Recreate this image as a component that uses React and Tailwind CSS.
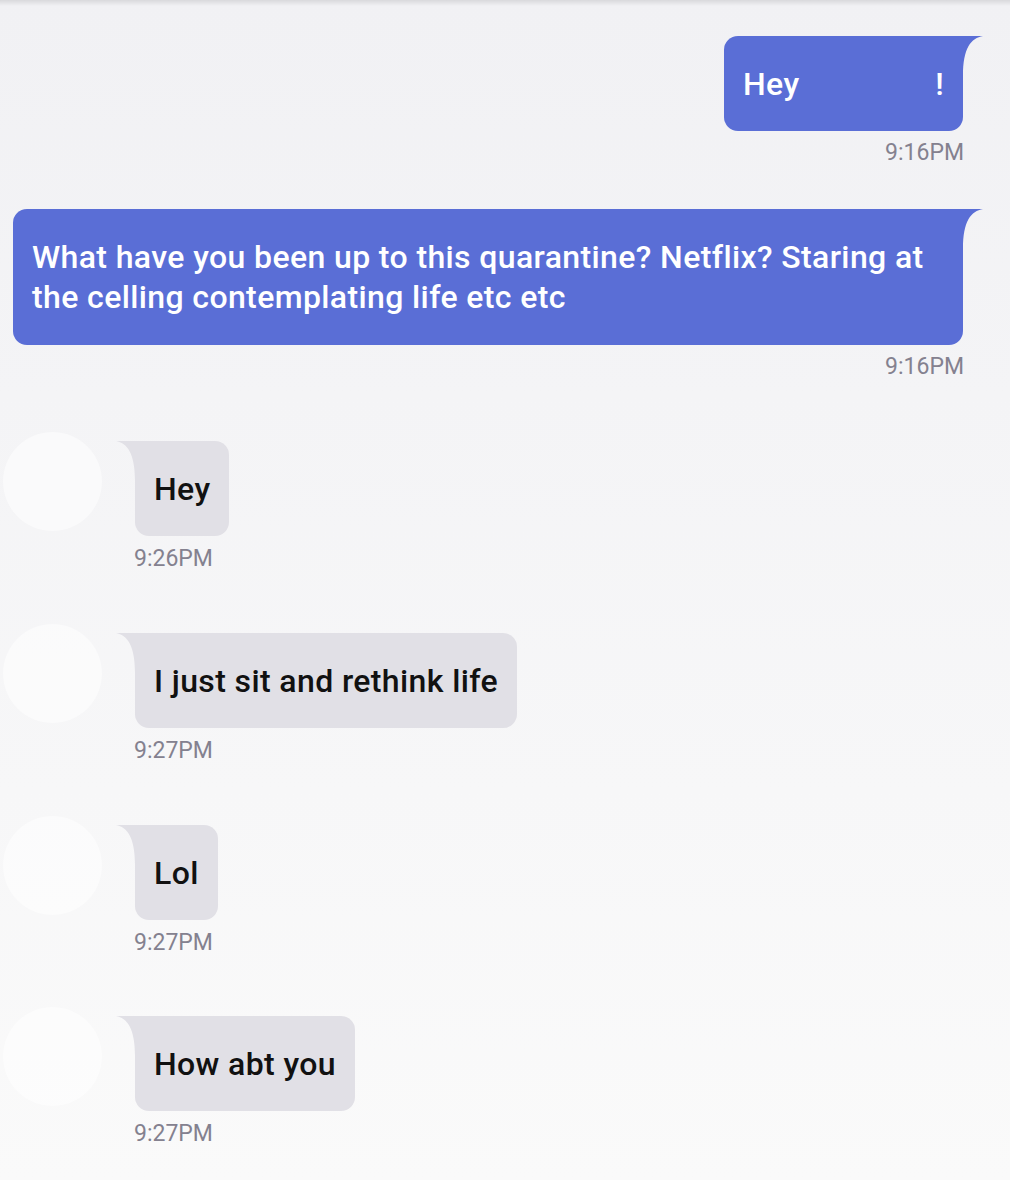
import React from "react";

const SENT = "#5a6ed6";
const RECV = "#e1e0e6";

function TailRight({ color }) {
  return (
    <svg width="20" height="40" viewBox="0 0 20 40" className="block shrink-0">
      <path d="M0 0 H20 C8 2 0 12 0 40 Z" fill={color} />
    </svg>
  );
}

function TailLeft({ color }) {
  return (
    <svg width="19" height="40" viewBox="0 0 19 40" className="block shrink-0">
      <path d="M19 0 H0 C11 2 19 12 19 40 Z" fill={color} />
    </svg>
  );
}

function Sent({ children, className = "", time, bodyClass = "" }) {
  return (
    <div className={"flex flex-col items-end " + className}>
      <div className="flex items-start pr-[27px]">
        <div
          className={
            "rounded-[14px] rounded-tr-none bg-[#5a6ed6] px-[19px] pt-[28px] pb-[27px] text-[32px] leading-[40px] tracking-[0.38px] font-medium text-white " +
            bodyClass
          }
        >
          {children}
        </div>
        <TailRight color={SENT} />
      </div>
      <div className="mt-[9px] pr-[46px] text-[23px] leading-[26px] text-[#84818f]">
        {time}
      </div>
    </div>
  );
}

function Received({ children, className = "", time }) {
  return (
    <div className={"flex flex-col " + className}>
      <div className="flex items-start pl-[3px]">
        <div className="mt-[-9px] h-[99px] w-[99px] shrink-0 rounded-full bg-white/50" />
        <div className="ml-[14px] flex items-start">
          <TailLeft color={RECV} />
          <div className="rounded-[14px] rounded-tl-none bg-[#e1e0e6] px-[19px] pt-[28px] pb-[27px] text-[32px] leading-[40px] tracking-[0.38px] font-medium text-[#111111]">
            {children}
          </div>
        </div>
      </div>
      <div className="mt-[10px] pl-[134px] text-[23px] leading-[26px] text-[#84818f]">
        {time}
      </div>
    </div>
  );
}

export default function App() {
  return (
    <div
      className="relative min-h-[1180px] w-full overflow-hidden bg-gradient-to-b from-[#f1f1f4] to-[#fafafa] pt-[36px]"
      style={{ fontFamily: "Roboto, 'Noto Sans', sans-serif" }}
    >
      <div className="pointer-events-none absolute inset-x-0 top-0 h-[6px] bg-gradient-to-b from-[#d9d9dc] to-transparent" />

      <Sent time="9:16PM" bodyClass="flex w-[239px] justify-between">
        <span>Hey</span>
        <span>!</span>
      </Sent>

      <Sent time="9:16PM" className="mt-[43px] pl-[13px]" bodyClass="flex-1 pb-[28px]">
        What have you been up to this quarantine? Netflix? Staring at the
        celling contemplating life etc etc
      </Sent>

      <Received time="9:26PM" className="mt-[61px]">
        Hey
      </Received>

      <Received time="9:27PM" className="mt-[61px]">
        I just sit and rethink life
      </Received>

      <Received time="9:27PM" className="mt-[61px]">
        Lol
      </Received>

      <Received time="9:27PM" className="mt-[60px]">
        How abt you
      </Received>
    </div>
  );
}
